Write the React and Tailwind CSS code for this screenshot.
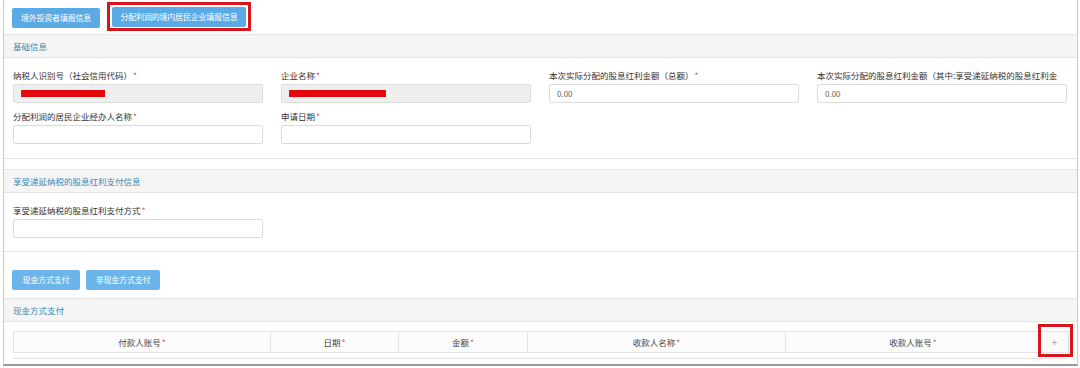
import React from 'react';

const font = { fontFamily: '"Noto Sans CJK SC", "Noto Sans", sans-serif' };

const Star = () => <span className="text-[#e05a5a] ml-[1px]">*</span>;

const Field = ({ label, required = true, value, disabled, redact }) => (
    <div className="w-[250px] flex flex-col">
        <div className="h-[12px] leading-[12px] text-[8.5px] text-[#333] whitespace-nowrap">
            {label}
            {required && <Star />}
        </div>
        <div
            className={`mt-[3px] h-[19px] border border-[#dcdcdc] rounded-[2px] flex items-center px-[7px] text-[8px] text-[#666] ${
                disabled ? 'bg-[#efefef]' : 'bg-white'
            }`}
        >
            {redact && <span className="block h-[7px] bg-[#e5080f]" style={{ width: redact }} />}
            {value}
        </div>
    </div>
);

const PanelHead = ({ title }) => (
    <div className="h-[23px] bg-[#f5f5f5] border-b border-[#e4e4e4] flex items-center pl-[9px] text-[8.5px] text-[#3a8ab5]">
        {title}
    </div>
);

const BlueBtn = ({ children, className = '' }) => (
    <button className={`h-[20px] rounded-[2px] text-white text-[8px] whitespace-nowrap tracking-[-0.2px] ${className}`}>
        {children}
    </button>
);

export default function App() {
    const cols = [
        { label: '付款人账号', w: 'w-[257px]' },
        { label: '日期', w: 'w-[128px]' },
        { label: '金额', w: 'w-[129px]' },
        { label: '收款人名称', w: 'w-[258px]' },
        { label: '收款人账号', w: 'w-[255px]' },
    ];

    return (
        <div className="w-[1080px] h-[368px] bg-white overflow-hidden pl-[3px]" style={font}>
            <div className="w-[1075px] h-[366px] border-l border-r border-[#c9c9c9] border-b-2 border-b-[#9a9a9a] flex flex-col">
                {/* top tabs */}
                <div className="flex items-start pl-[8px] pt-[2px]">
                    <BlueBtn className="mt-[6px] w-[88px] bg-[#5aabe5]">境外投资者填报信息</BlueBtn>
                    <div className="ml-[7px] border-[3px] border-[#d8141c] p-[2px] pb-[1px]">
                        <BlueBtn className="block w-[134px] bg-[#5aabe5]">分配利润的境内居民企业填报信息</BlueBtn>
                    </div>
                </div>

                {/* 基础信息 */}
                <div className="mt-[3px] border-t border-b border-[#e4e4e4]">
                    <PanelHead title="基础信息" />
                    <div className="pl-[9px] pt-[11px] pb-[14px] flex flex-col gap-[7px]">
                        <div className="flex gap-[18px]">
                            <Field label="纳税人识别号（社会信用代码）" disabled redact="84px" />
                            <Field label="企业名称" disabled redact="97px" />
                            <Field label="本次实际分配的股息红利金额（总额）" value="0.00" />
                            <Field label="本次实际分配的股息红利金额（其中:享受递延纳税的股息红利金" required={false} value="0.00" />
                        </div>
                        <div className="flex gap-[18px]">
                            <Field label="分配利润的居民企业经办人名称" />
                            <Field label="申请日期" />
                        </div>
                    </div>
                </div>

                {/* 享受递延纳税 */}
                <div className="mt-[10px] border-t border-b border-[#e4e4e4]">
                    <PanelHead title="享受递延纳税的股息红利支付信息" />
                    <div className="pl-[9px] pt-[11px] pb-[13px]">
                        <Field label="享受递延纳税的股息红利支付方式" />
                    </div>
                </div>

                <div className="flex gap-[6px] pl-[8px] mt-[18px]">
                    <BlueBtn className="w-[68px] h-[19px] bg-[#6cb5ea]">现金方式支付</BlueBtn>
                    <BlueBtn className="w-[74px] h-[19px] bg-[#6cb5ea]">非现金方式支付</BlueBtn>
                </div>

                {/* 现金方式支付 */}
                <div className="mt-[8px] border-t border-[#e4e4e4] flex-1">
                    <PanelHead title="现金方式支付" />
                    <div className="pl-[9px] pt-[9px]">
                        <div className="flex h-[22px] border border-[#e4e4e4] bg-[#fcfcfc] w-[1056px]">
                            {cols.map((c) => (
                                <div
                                    key={c.label}
                                    className={`${c.w} border-r border-[#e4e4e4] flex items-center justify-center text-[8.5px] text-[#444]`}
                                >
                                    {c.label}
                                    <Star />
                                </div>
                            ))}
                            <div className="relative flex-1 flex items-center justify-center text-[#aaa] text-[11px]">
                                +
                                <div className="absolute -top-[8px] -bottom-[5px] -left-[3px] -right-[5px] border-[3px] border-[#d8141c]" />
                            </div>
                        </div>
                        <div className="w-[1056px] mt-[5px] border-t border-[#e4e4e4]" />
                    </div>
                </div>
            </div>
        </div>
    );
}
